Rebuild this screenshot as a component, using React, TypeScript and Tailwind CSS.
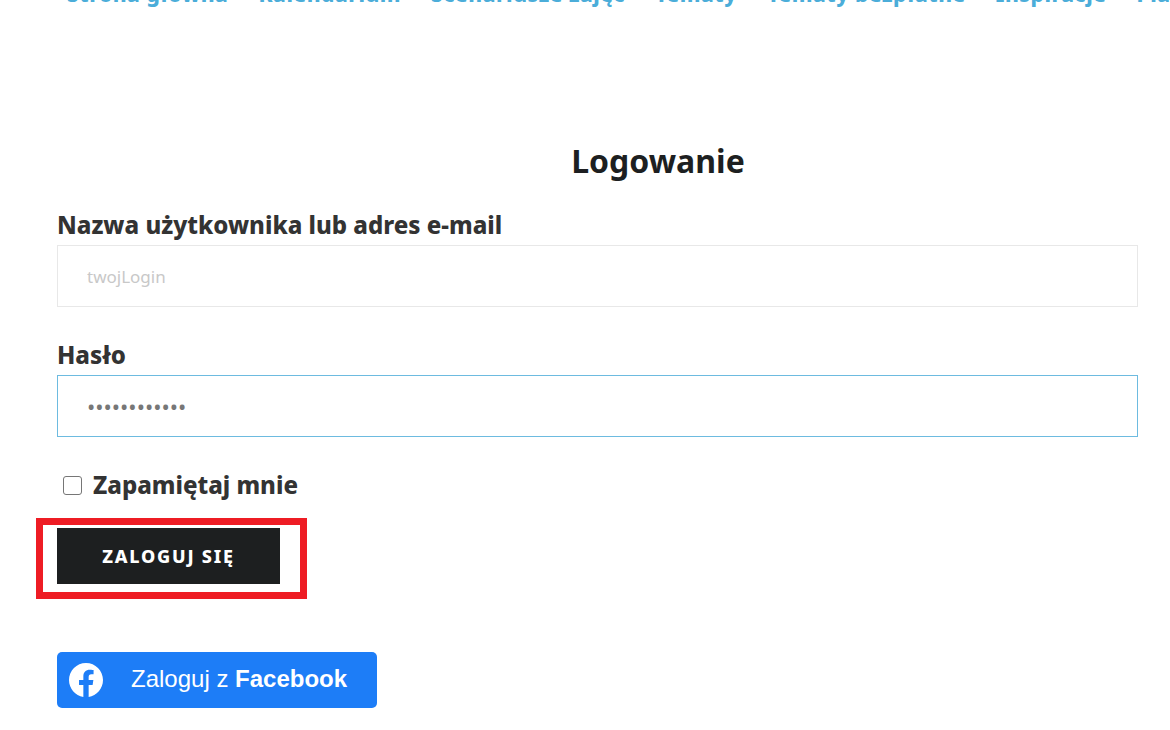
const navItems = [
  "Strona główna",
  "Kalendarium",
  "Scenariusze zajęć",
  "Tematy",
  "Tematy bezpłatne",
  "Inspiracje",
  "Plany",
];

const labelClass = "text-2xl leading-8 font-extrabold text-[#333333]";
const fieldClass =
  "block h-[62px] w-full border bg-white px-[29px] outline-none";

function MainNav() {
  return (
    <nav className="h-[100px] overflow-hidden pl-[67px]">
      <ul className="-mt-[18px] flex gap-[30px] text-[21px] leading-6 font-extrabold tracking-wide whitespace-nowrap text-[#4badd9]">
        {navItems.map((item) => (
          <li key={item}>
            <a href="#">{item}</a>
          </li>
        ))}
      </ul>
    </nav>
  );
}

function FacebookLogo() {
  return (
    <svg viewBox="0 0 24 24" className="size-[34px] fill-white" aria-hidden="true">
      <path d="M24 12.073C24 5.405 18.627 0 12 0S0 5.405 0 12.073C0 18.1 4.388 23.094 10.125 24v-8.437H7.078v-3.49h3.047v-2.66c0-3.025 1.792-4.697 4.533-4.697 1.312 0 2.686.236 2.686.236v2.971H15.83c-1.491 0-1.956.93-1.956 1.886v2.264h3.328l-.532 3.49h-2.796V24C19.612 23.094 24 18.1 24 12.073z" />
    </svg>
  );
}

export default function App() {
  return (
    <div className="min-h-screen overflow-hidden bg-white pb-5 font-['Noto_Sans',sans-serif]">
      <MainNav />

      <main>
        <h1 className="pt-10 pl-[146px] text-center text-[32px] leading-[42px] font-bold text-[#1d1f21]">
          Logowanie
        </h1>

        <form className="mt-[27px] mr-8 ml-[57px]" onSubmit={(e) => e.preventDefault()}>
          <label htmlFor="login" className={`${labelClass} block`}>
            Nazwa użytkownika lub adres e-mail
          </label>
          <input
            id="login"
            type="text"
            placeholder="twojLogin"
            className={`${fieldClass} mt-1 border-[#e8e8e8] text-[17px] placeholder:text-[#c8c8c8]`}
          />

          <label htmlFor="password" className={`${labelClass} mt-8 block`}>
            Hasło
          </label>
          <input
            id="password"
            type="password"
            defaultValue="mojehaslo123"
            className={`${fieldClass} mt-1 border-[#6dbbe0] text-[22px] text-[#777777]`}
          />

          <div className="mt-8 flex items-center gap-[11px] pl-[6px]">
            <input
              id="remember"
              type="checkbox"
              className="size-[19px] appearance-none rounded-[3px] border border-[#767676] bg-white"
            />
            <label htmlFor="remember" className={labelClass}>
              Zapamiętaj mnie
            </label>
          </div>

          {/* highlighted submit */}
          <div className="mt-[17px] -ml-[21px] w-fit border-[7px] border-[#ee1c24] pt-[3px] pr-5 pb-2 pl-[14px]">
            <button
              type="submit"
              className="block h-14 w-[223px] bg-[#1d1f20] text-lg font-extrabold tracking-widest text-white uppercase"
            >
              Zaloguj się
            </button>
          </div>

          <button
            type="button"
            className="mt-[53px] flex h-14 w-80 items-center gap-7 rounded-[5px] bg-[#1d7df7] pl-3 font-['Liberation_Sans',sans-serif] text-2xl text-white"
          >
            <FacebookLogo />
            <span className="pb-[2px]">
              Zaloguj z <b>Facebook</b>
            </span>
          </button>
        </form>
      </main>
    </div>
  );
}
